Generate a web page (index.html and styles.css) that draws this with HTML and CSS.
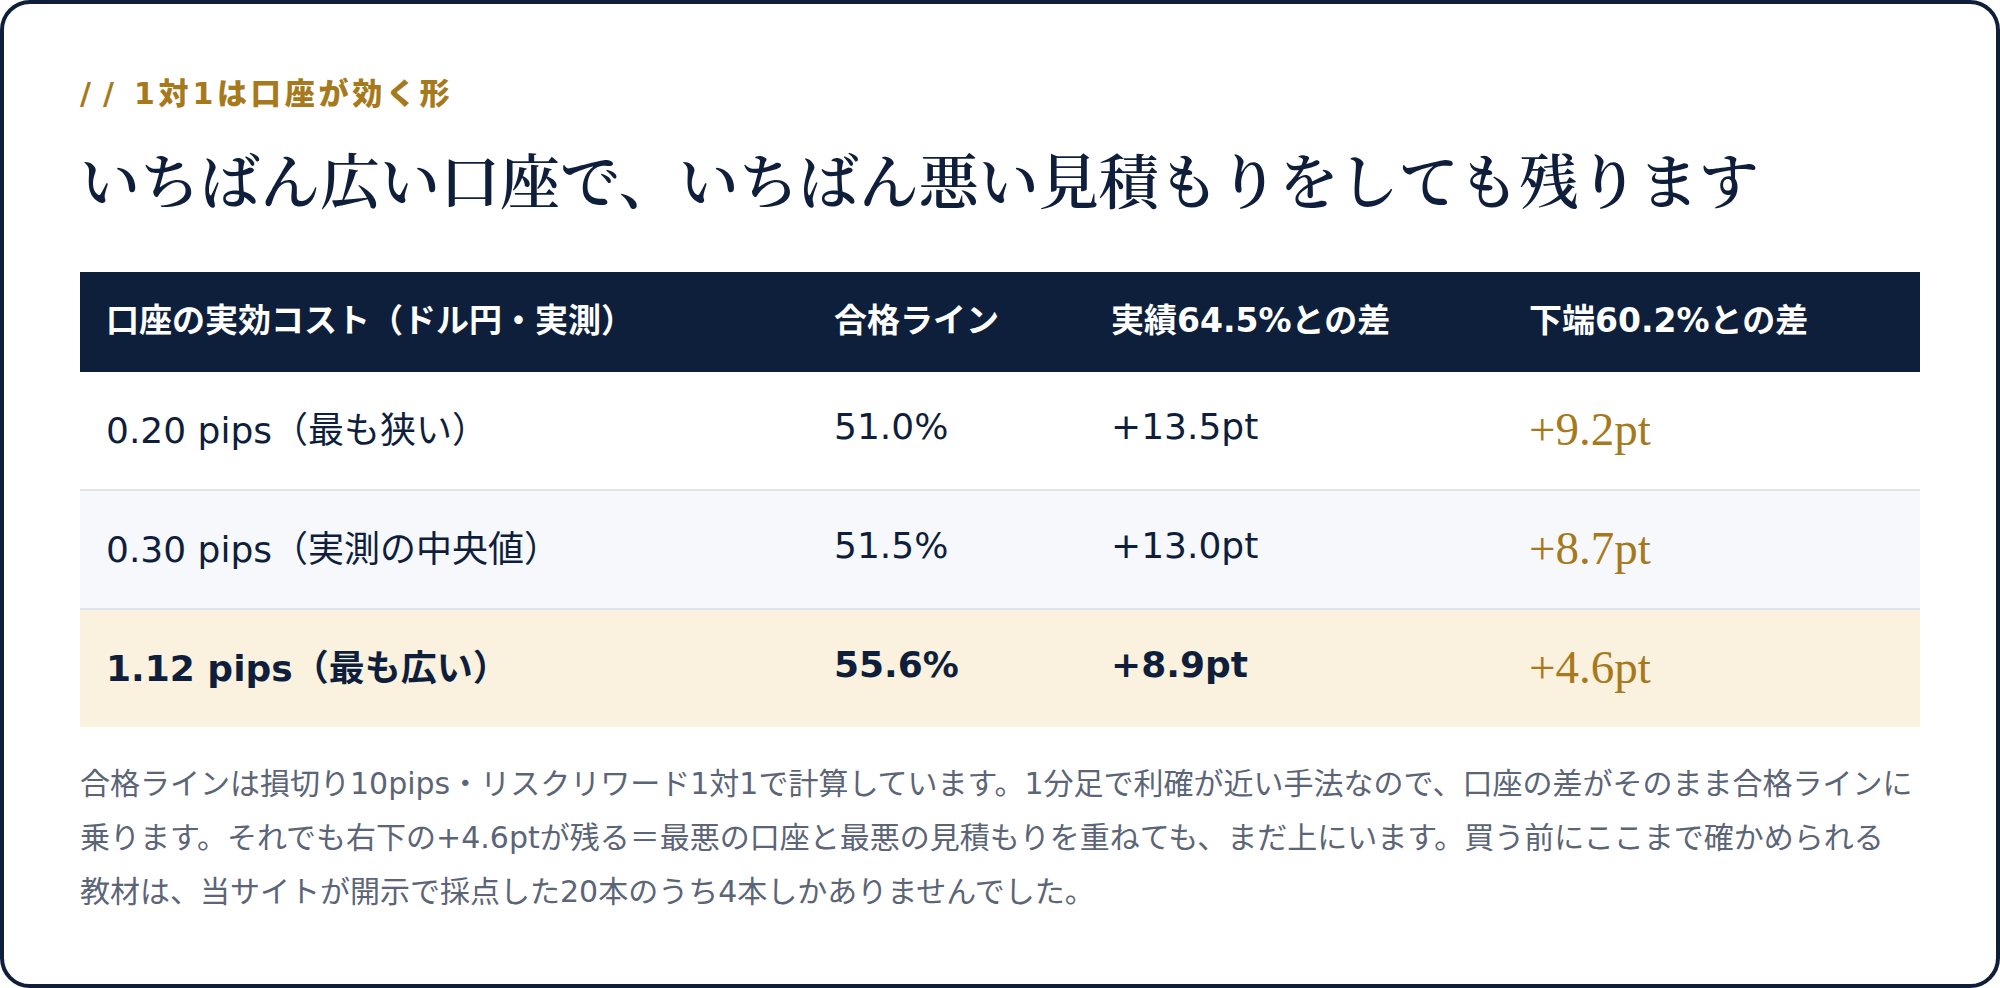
FILE: index.html
```html
<!DOCTYPE html>
<html lang="ja">
<head>
<meta charset="utf-8">
<title>1対1は口座が効く形</title>
<link rel="stylesheet" href="styles.css">
</head>
<body>
<section class="card">
  <p class="eyebrow"><span class="slash">//</span>1対1は口座が効く形</p>
  <h2 class="title">いちばん広い口座で、いちばん悪い見積もりをしても残ります</h2>
  <table class="cost-table">
    <colgroup>
      <col class="c1"><col class="c2"><col class="c3"><col class="c4">
    </colgroup>
    <thead>
      <tr>
        <th>口座の実効コスト（ドル円・実測）</th>
        <th>合格ライン</th>
        <th>実績64.5%との差</th>
        <th>下端60.2%との差</th>
      </tr>
    </thead>
    <tbody>
      <tr>
        <td>0.20 pips（最も狭い）</td>
        <td>51.0%</td>
        <td>+13.5pt</td>
        <td class="margin">+9.2pt</td>
      </tr>
      <tr class="alt">
        <td>0.30 pips（実測の中央値）</td>
        <td>51.5%</td>
        <td>+13.0pt</td>
        <td class="margin">+8.7pt</td>
      </tr>
      <tr class="worst">
        <td>1.12 pips（最も広い）</td>
        <td>55.6%</td>
        <td>+8.9pt</td>
        <td class="margin">+4.6pt</td>
      </tr>
    </tbody>
  </table>
  <p class="note">合格ラインは損切り10pips・リスクリワード1対1で計算しています。1分足で利確が近い手法なので、口座の差がそのまま合格ラインに乗ります。それでも右下の+4.6ptが残る＝最悪の口座と最悪の見積もりを重ねても、まだ上にいます。買う前にここまで確かめられる<span class="phrase">教材は、</span>当サイトが開示で採点した20本のうち4本しかありませんでした。</p>
</section>
</body>
</html>
```

FILE: styles.css
```css
html, body {
  margin: 0;
  padding: 0;
  background: #ffffff;
}

body {
  font-family: "DejaVu Sans", "Noto Sans CJK JP", sans-serif;
  color: #0f1f3b;
}

.card {
  box-sizing: border-box;
  width: 100%;
  height: 988px;
  border: 4px solid #0f1f3b;
  border-radius: 30px;
  padding: 70px 76px 0;
  background: #ffffff;
}

.eyebrow {
  margin: 0;
  font-size: 30px;
  line-height: 40px;
  font-weight: 900;
  letter-spacing: 3.8px;
  color: #a67a1c;
}

.eyebrow .slash {
  letter-spacing: 12px;
  margin-right: 8px;
}

.title {
  margin: 31px 0 0;
  font-family: "Liberation Serif", "Noto Serif CJK JP", serif;
  font-weight: 600;
  font-size: 60px;
  line-height: 78px;
  color: #0f1f3b;
}

.cost-table {
  margin-top: 49px;
  width: 100%;
  border-collapse: separate;
  border-spacing: 0;
  table-layout: fixed;
}

.c1 { width: 728px; }
.c2 { width: 277px; }
.c3 { width: 418px; }
.c4 { width: 417px; }

.cost-table th {
  box-sizing: border-box;
  height: 100px;
  padding: 0 26px 8px;
  background: #0e1f3b;
  color: #ffffff;
  font-size: 33px;
  font-weight: 700;
  text-align: left;
  vertical-align: middle;
  white-space: nowrap;
}

.cost-table td {
  box-sizing: border-box;
  height: 119px;
  padding: 0 26px 8px;
  font-size: 36px;
  color: #0f1f3b;
  vertical-align: middle;
  white-space: nowrap;
  border-bottom: 2px solid #dde3ea;
}

.cost-table tr.alt td {
  background: #f6f8fb;
}

.cost-table tr.worst td {
  height: 117px;
  background: #faf1de;
  font-weight: 700;
  border-bottom: 0;
}

.cost-table td.margin,
.cost-table tr.worst td.margin {
  font-family: "Liberation Serif", "Noto Serif CJK JP", serif;
  font-weight: 400;
  font-size: 47px;
  padding-bottom: 4px;
  color: #a67a1c;
}

.note {
  margin: 30px 0 0;
  font-size: 30px;
  line-height: 54px;
  color: #5b6577;
}

.note .phrase {
  white-space: nowrap;
}
```
